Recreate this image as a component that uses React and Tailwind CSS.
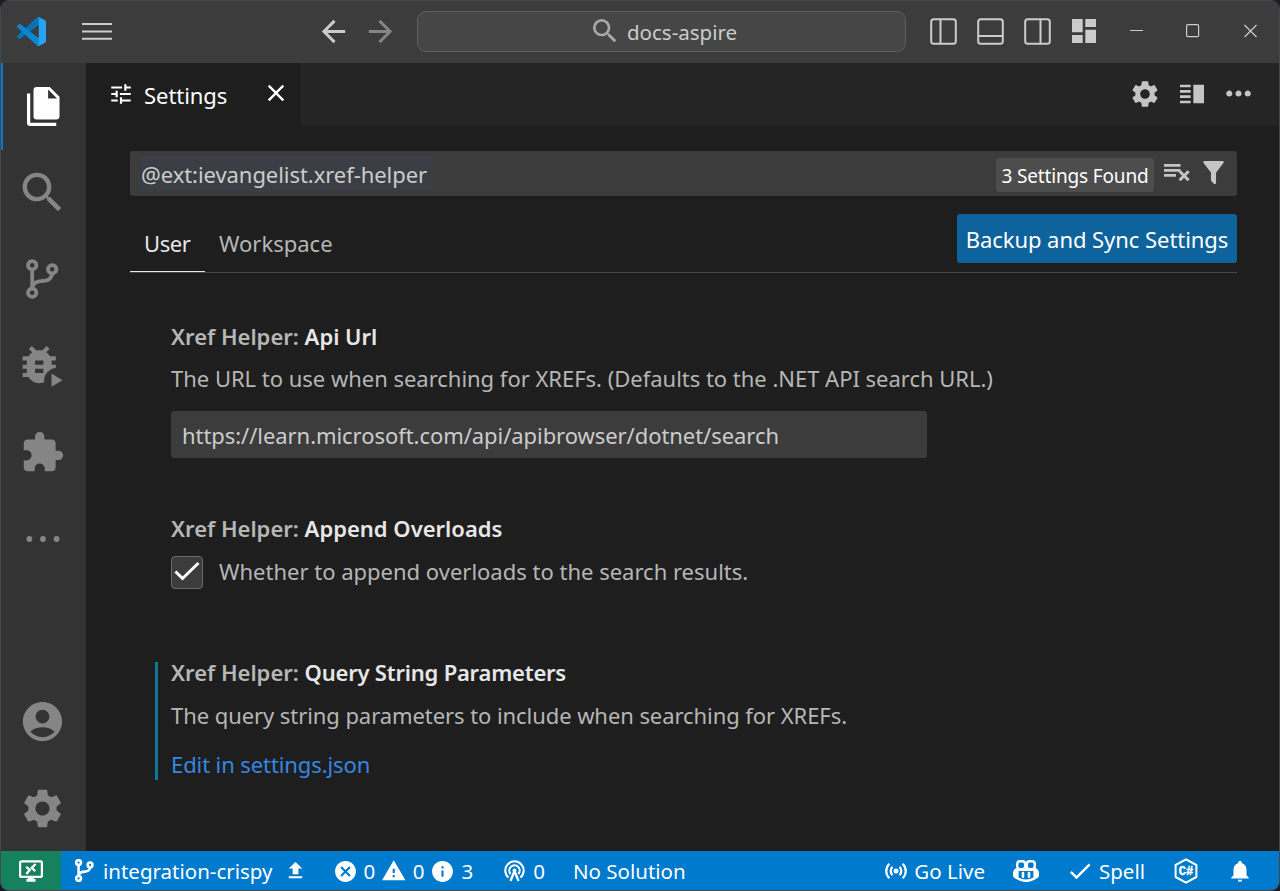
import {
  MdArrowBack, MdArrowForward, MdSearch, MdDashboard, MdSettings, MdVerticalSplit,
  MdMoreHoriz, MdTune, MdClose, MdExtension, MdAccountCircle, MdUpload, MdCancel,
  MdWarning, MdInfo, MdCheck, MdNotifications,
} from "react-icons/md";

const VSCodeLogo = () => (
  <svg viewBox="0 0 100 100" className="size-[29px] shrink-0">
    <path fill="#0273b8" d="M96.46 10.8 75.86.88a6.23 6.23 0 0 0-7.11 1.2L1.3 63.58a4.17 4.17 0 0 0 0 6.17l5.51 5a4.17 4.17 0 0 0 5.32.24l81.23-61.62A4.14 4.14 0 0 1 100 16.67v-.24a6.25 6.25 0 0 0-3.54-5.63z" />
    <path fill="#0a86d3" d="M96.46 89.2 75.86 99.12a6.23 6.23 0 0 1-7.11-1.2L1.3 36.42a4.17 4.17 0 0 1 0-6.17l5.51-5a4.17 4.17 0 0 1 5.32-.24l81.23 61.62A4.14 4.14 0 0 0 100 83.33v.24a6.25 6.25 0 0 1-3.54 5.63z" />
    <path fill="#27a3f3" d="M75.86 99.13a6.23 6.23 0 0 1-7.11-1.21c2.3 2.3 6.25.67 6.25-2.59V4.67c0-3.26-3.94-4.9-6.25-2.59a6.23 6.23 0 0 1 7.11-1.21l20.6 9.91a6.25 6.25 0 0 1 3.54 5.63v67.18a6.25 6.25 0 0 1-3.54 5.63z" />
  </svg>
);

const MenuIcon = () => (
  <svg viewBox="0 0 30 18" className="h-[18px] w-[30px] shrink-0" stroke="#cccccc" strokeWidth="2">
    <path d="M0 2h30M0 9.4h30M0 16.8h30" />
  </svg>
);

const PanelIcon = ({ d }) => (
  <svg viewBox="0 0 27 27" className="size-[27px] shrink-0" fill="none" stroke="#cccccc" strokeWidth="2">
    <rect x="1.2" y="1.2" width="24.6" height="24.6" rx="2.5" />
    <path d={d} />
  </svg>
);

const FilesIcon = () => (
  <svg viewBox="4 0 20 24" className="h-[39px] w-[32.5px]" fill="#ffffff">
    <path d="M17 7h5.5L17 1.5V7M10 0h8l6 6v12a2 2 0 0 1-2 2H10a2 2 0 0 1-2-2V2a2 2 0 0 1 2-2z" />
    <path d="M4 4v18a2 2 0 0 0 2 2h16v-2H6V4z" />
  </svg>
);

const BranchIcon = ({ className, strokeWidth = 3.8 }) => (
  <svg viewBox="0 0 33 40" className={className} fill="none" stroke="currentColor" strokeWidth={strokeWidth}>
    <circle cx="6.2" cy="6.3" r="4.2" />
    <circle cx="26.2" cy="10.3" r="4.2" />
    <circle cx="6.2" cy="33.7" r="4.2" />
    <path d="M6.2 10.5v19M26.2 14.5c-.6 4.6-3.6 7-8 7.4-6 .5-10.400.6-12 6.400" />
  </svg>
);

const BugIcon = () => (
  <svg viewBox="0 0 41 42" className="h-[42px] w-[41px]" fill="currentColor">
    <mask id="bug-cut">
      <rect width="41" height="42" fill="#fff" />
      <circle cx="35" cy="36" r="13" fill="#000" />
    </mask>
    <g mask="url(#bug-cut)">
      <path transform="translate(-7.6 -5.2) scale(2.07)" d="M20 8h-2.81c-.45-.78-1.07-1.45-1.82-1.96L17 4.41 15.59 3l-2.17 2.17C12.96 5.06 12.49 5 12 5c-.49 0-.96.06-1.41.17L8.41 3 7 4.41l1.62 1.63C7.88 6.55 7.26 7.22 6.81 8H4v2h2.09c-.05.33-.09.66-.09 1v1H4v2h2v1c0 .34.04.67.09 1H4v2h2.81c1.04 1.79 2.97 3 5.19 3s4.15-1.21 5.19-3H20v-2h-2.09c.05-.33.09-.66.09-1v-1h2v-2h-2v-1c0-.34-.04-.67-.09-1H20V8zm-6 8h-4v-2h4v2zm0-4h-4v-2h4v2z" />
    </g>
    <path d="M29.5 28.5v13.3l11-6.6z" />
  </svg>
);

const DotsIcon = () => (
  <svg viewBox="0 0 34 6" className="h-1.5 w-[34px]" fill="currentColor">
    <circle cx="3.4" cy="3" r="2.9" /><circle cx="17" cy="3" r="2.9" /><circle cx="30.6" cy="3" r="2.9" />
  </svg>
);

const ClearIcon = () => (
  <svg viewBox="0 0 26 18" className="h-[18px] w-[26px]" fill="none" stroke="#c5c5c5">
    <path d="M0 1.4h16.5M0 6.4h16.5M0 11.4h12" strokeWidth="2.8" />
    <path d="m15.6 7.2 9 9M24.6 7.2l-9 9" strokeWidth="3" />
  </svg>
);

const FunnelIcon = () => (
  <svg viewBox="4 3 16 18" className="h-[23px] w-[21px]" fill="#c5c5c5">
    <path d="M14 12v7.88c.04.3-.06.62-.29.83a1 1 0 0 1-1.41 0l-2.01-2.01a1 1 0 0 1-.29-.83V12h-.03L4.21 4.62a1 1 0 0 1 .17-1.4c.19-.14.4-.22.62-.22h14c.22 0 .43.08.62.22a1 1 0 0 1 .17 1.4L14.03 12z" />
  </svg>
);

const RemoteIcon = () => (
  <svg viewBox="0 0 24 22" className="h-[22px] w-6" fill="none" stroke="#ffffff">
    <rect x="1.1" y="1.3" width="21.8" height="15.6" rx="1.5" strokeWidth="2.2" />
    <path d="M7.5 20.4h9" strokeWidth="2.6" />
    <path d="M12 17v3" strokeWidth="6" />
    <path d="m7.2 6.800 3.600 3-3.400 4.200M16.600 4l-3.800 3.700 3.400 3.400" strokeWidth="2.300" />
  </svg>
);

const TowerIcon = () => (
  <svg viewBox="0 0 21 22" className="h-[22px] w-[21px]" fill="none" stroke="currentColor" strokeWidth="2">
    <path d="M4.600 17.600A9.200 9.200 0 1 1 16.400 17.600" />
    <path d="M6.600 14A5.200 5.200 0 1 1 14.400 14" />
    <circle cx="10.5" cy="10.4" r="2" fill="currentColor" stroke="none" />
    <path d="m10.500 11-4 10M10.500 11l4 10" strokeWidth="2.300" />
  </svg>
);

const BroadcastIcon = () => (
  <svg viewBox="0 0 22 18" className="h-[18px] w-[22px]" fill="none" stroke="currentColor" strokeWidth="2.2">
    <circle cx="11" cy="9" r="2.500" fill="currentColor" stroke="none" />
    <path d="M7.5 4.9a5.6 5.6 0 0 0 0 8.2M14.5 4.9a5.6 5.6 0 0 1 0 8.2M4.4 1.7a10 10 0 0 0 0 14.6M17.6 1.7a10 10 0 0 1 0 14.6" />
  </svg>
);

const CopilotIcon = () => (
  <svg viewBox="0 0 26 22" className="h-[22px] w-[26px]" fill="none" stroke="currentColor">
    <rect x="4.200" y="1.300" width="8" height="7.800" rx="2.800" strokeWidth="2.400" />
    <rect x="13.800" y="1.300" width="8" height="7.800" rx="2.800" strokeWidth="2.400" />
    <path
      fill="currentColor" stroke="none" fillRule="evenodd"
      d="M3 8.200h20c1.800 1 3 2.600 3 4.600v2.400c0 1.200-.6 2-1.600 2.700C21.500 20 17.500 22 13 22S4.500 20 1.600 17.900C.6 17.200 0 16.400 0 15.200v-2.400c0-2 1.200-3.600 3-4.600zM5.600 11v6.600c2.200 1.200 4.800 1.900 7.400 1.900s5.200-.7 7.400-1.900V11z"
    />
    <path d="M10 13v3.800M16 13v3.800" strokeWidth="2.600" strokeLinecap="round" />
  </svg>
);

const CSharpIcon = () => (
  <svg viewBox="0 0 24 26" className="h-[26px] w-6" fill="none">
    <path d="M12 1.4 22.4 7v12L12 24.6 1.600 19V7z" stroke="#ffffff" strokeWidth="2" strokeLinejoin="round" />
    <text x="12" y="17" textAnchor="middle" fill="#ffffff" stroke="#ffffff" strokeWidth=".4" className="font-['Liberation_Mono'] text-[12px] font-bold">C#</text>
  </svg>
);

const ActivityItem = ({ active, children }) => (
  <div className={active ? "flex h-[86.500px] items-center justify-center border-l-2 border-[#0078d4] pr-[2px] text-white" : "flex h-[86.500px] items-center justify-center pr-[1.500px] text-[#858585]"}>
    {children}
  </div>
);

const SettingTitle = ({ children, className }) => (
  <h3 className={`font-semibold whitespace-nowrap text-[#b6b6b6] ${className}`}>
    Xref Helper: <span className="text-[#e7e7e7]">{children}</span>
  </h3>
);

function TitleBar() {
  return (
    <header className="flex h-[62px] shrink-0 items-center bg-[#3c3c3c] pb-[2px] pl-4 text-[20.5px] text-[#cccccc]">
      <VSCodeLogo />
      <div className="ml-9"><MenuIcon /></div>
      <div className="ml-[204px] flex w-[82px] items-center justify-between">
        <MdArrowBack size={35} />
        <MdArrowForward size={35} className="text-[#858585]" />
      </div>
      <div className="ml-[19px] flex h-[41px] w-[489px] items-center rounded-[9px] border border-[#5f5f5f] bg-[#464646] pl-[171px]">
        <MdSearch size={32} className="text-[#a9a9a9]" />
        <span className="mt-[2px] ml-[6px] leading-[30px] whitespace-nowrap">docs-aspire</span>
      </div>
      <div className="ml-6 flex items-center gap-5">
        <PanelIcon d="M10.5 1v25" />
        <PanelIcon d="M1 18h25" />
        <PanelIcon d="M16.5 1v25" />
      </div>
      <MdDashboard size={32} className="ml-[17px]" />
      <svg viewBox="0 0 128 14" className="ml-[30px] h-3.5 w-32" fill="none" stroke="#cccccc" strokeWidth="1.2">
        <path d="M0 6.5h13M114.5 1l12 12M126.5 1l-12 12" />
        <rect x="56.6" y=".7" width="12" height="12" rx="1.2" />
      </svg>
    </header>
  );
}

function ActivityBar() {
  return (
    <nav className="flex w-[85px] shrink-0 flex-col justify-between bg-[#333333]">
      <div>
        <ActivityItem active><FilesIcon /></ActivityItem>
        <ActivityItem><MdSearch size={53} /></ActivityItem>
        <ActivityItem><BranchIcon className="h-10 w-[33px]" /></ActivityItem>
        <ActivityItem><BugIcon /></ActivityItem>
        <ActivityItem><MdExtension size={45} /></ActivityItem>
        <ActivityItem><DotsIcon /></ActivityItem>
      </div>
      <div>
        <ActivityItem><MdAccountCircle size={47} /></ActivityItem>
        <ActivityItem><MdSettings size={47} className="mt-[2px]" /></ActivityItem>
      </div>
    </nav>
  );
}

function EditorTabs() {
  return (
    <div className="flex h-[63px] items-center justify-between bg-[#252526]">
      <div className="flex h-full w-[215px] items-center bg-[#1e1e1e] pl-[22px] text-white">
        <MdTune size={26} className="mb-px" />
        <span className="ml-[10px] leading-[30px] tracking-[-0.050px]">Settings</span>
        <MdClose size={28} className="mb-1 ml-[35px]" />
      </div>
      <div className="flex items-center pr-[22px] pb-[2px] text-[#c5c5c5]">
        <MdSettings size={32} />
        <MdVerticalSplit size={32} className="ml-[15px]" />
        <MdMoreHoriz size={37} className="ml-3" />
      </div>
    </div>
  );
}

function SettingsEditor() {
  return (
    <div className="pt-[25px] pr-[42px] pl-11 leading-[30px] text-[#b6b6b6]">
      <div className="flex h-[45px] items-center rounded-[3px] bg-[#3c3c3c] pr-[13px] pl-[11px] text-[#cccccc]">
        <span className="h-[35px] w-[291px] bg-[#3b3f45] pt-px leading-[35px] tracking-[-0.060px] whitespace-nowrap">@ext:ievangelist.xref-helper</span>
        <span className="mt-[3px] ml-auto flex h-[34px] w-[158px] items-center justify-center rounded-[3px] bg-[#4d4d4d] pt-[2px] text-[19px] tracking-[-0.160px] whitespace-nowrap text-white">3 Settings Found</span>
        <div className="mb-px ml-[10px]"><ClearIcon /></div>
        <div className="mb-[2px] ml-[13px]"><FunnelIcon /></div>
      </div>

      <div className="flex h-[77px] items-start justify-between border-b border-[#474747]">
        <div className="flex h-full">
          <div className="-mb-px h-[76px] w-[75px] border-b border-[#e7e7e7] pt-[32px] pl-[14px] tracking-[-0.400px] text-[#e7e7e7]">User</div>
          <div className="pt-[32px] pl-[14px]">Workspace</div>
        </div>
        <button className="mt-[18px] h-[49px] w-[280px] rounded-[3px] bg-[#0e639c] tracking-[-0.050px] whitespace-nowrap text-white">Backup and Sync Settings</button>
      </div>

      <section className="mt-12 pl-[41px]">
        <SettingTitle>Api Url</SettingTitle>
        <p className="mt-3 tracking-[-0.020px] whitespace-nowrap">The URL to use when searching for XREFs. (Defaults to the .NET API search URL.)</p>
        <div className="mt-[18px] flex h-[47px] w-[756px] items-center rounded-[3px] bg-[#3c3c3c] pl-[11px] tracking-[-0.060px] text-[#cccccc]">https://learn.microsoft.com/api/apibrowser/dotnet/search</div>
      </section>

      <section className="mt-[55px] pl-[41px]">
        <SettingTitle>Append Overloads</SettingTitle>
        <div className="mt-[13px] flex h-[33px] items-center">
          <span className="flex h-[33px] w-8 items-center justify-center rounded-[4px] border border-[#6b6b6b] bg-[#3c3c3c] text-white">
            <svg viewBox="0 0 26 20" className="mb-1 h-5 w-[26px]" fill="none" stroke="currentColor" strokeWidth="3"><path d="m1.5 10.5 7 7L24.5 2" /></svg>
          </span>
          <span className="mb-[3px] ml-4 whitespace-nowrap">Whether to append overloads to the search results.</span>
        </div>
      </section>

      <section className="mt-[73px] ml-[25px] h-[118px] border-l-[3px] border-[#127898] pl-[13px]">
        <SettingTitle className="leading-[21px]"><span className="tracking-[-0.220px]">Query String Parameters</span></SettingTitle>
        <p className="mt-[17px] tracking-[-0.070px] whitespace-nowrap">The query string parameters to include when searching for XREFs.</p>
        <a className="mt-[19px] block tracking-[-0.100px] text-[#3587e2]">Edit in settings.json</a>
      </section>
    </div>
  );
}

function StatusBar() {
  return (
    <footer className="flex h-[39px] shrink-0 items-center bg-[#007acc] text-[20.5px] leading-[30px] whitespace-nowrap text-white">
      <div className="flex h-full w-[60px] items-center justify-center bg-[#16825d]"><RemoteIcon /></div>
      <BranchIcon className="ml-[14px] h-[23px] w-[19px]" strokeWidth={4.400} />
      <span className="ml-[9px]">integration-crispy</span>
      <MdUpload size={23} className="ml-[11px]" />
      <MdCancel size={25} className="mt-px ml-[26px]" />
      <span className="ml-[6px]">0</span>
      <MdWarning size={25.5} className="ml-[6px]" />
      <span className="ml-[6px]">0</span>
      <MdInfo size={25} className="mt-px ml-[6px]" />
      <span className="ml-[6px]">3</span>
      <div className="ml-[31px]"><TowerIcon /></div>
      <span className="ml-[8px]">0</span>
      <span className="ml-[28px]">No Solution</span>
      <div className="ml-auto flex items-center pr-[26px]">
        <BroadcastIcon />
        <span className="ml-[7px]">Go Live</span>
        <div className="ml-[28px]"><CopilotIcon /></div>
        <MdCheck size={28} className="ml-[27px]" />
        <span className="ml-[5px]">Spell</span>
        <div className="ml-[29px]"><CSharpIcon /></div>
        <MdNotifications size={26} className="ml-[29px]" />
      </div>
    </footer>
  );
}

export default function App() {
  return (
    <div className="h-[891px] w-[1280px] overflow-hidden bg-[#171d26]">
      <div className="flex h-full flex-col overflow-hidden rounded-[9px] border border-[#43484d] bg-[#1e1e1e] font-['Noto_Sans',sans-serif] text-[22px]">
        <TitleBar />
        <div className="flex min-h-0 flex-1">
          <ActivityBar />
          <main className="min-w-0 flex-1">
            <EditorTabs />
            <SettingsEditor />
          </main>
        </div>
        <StatusBar />
      </div>
    </div>
  );
}
